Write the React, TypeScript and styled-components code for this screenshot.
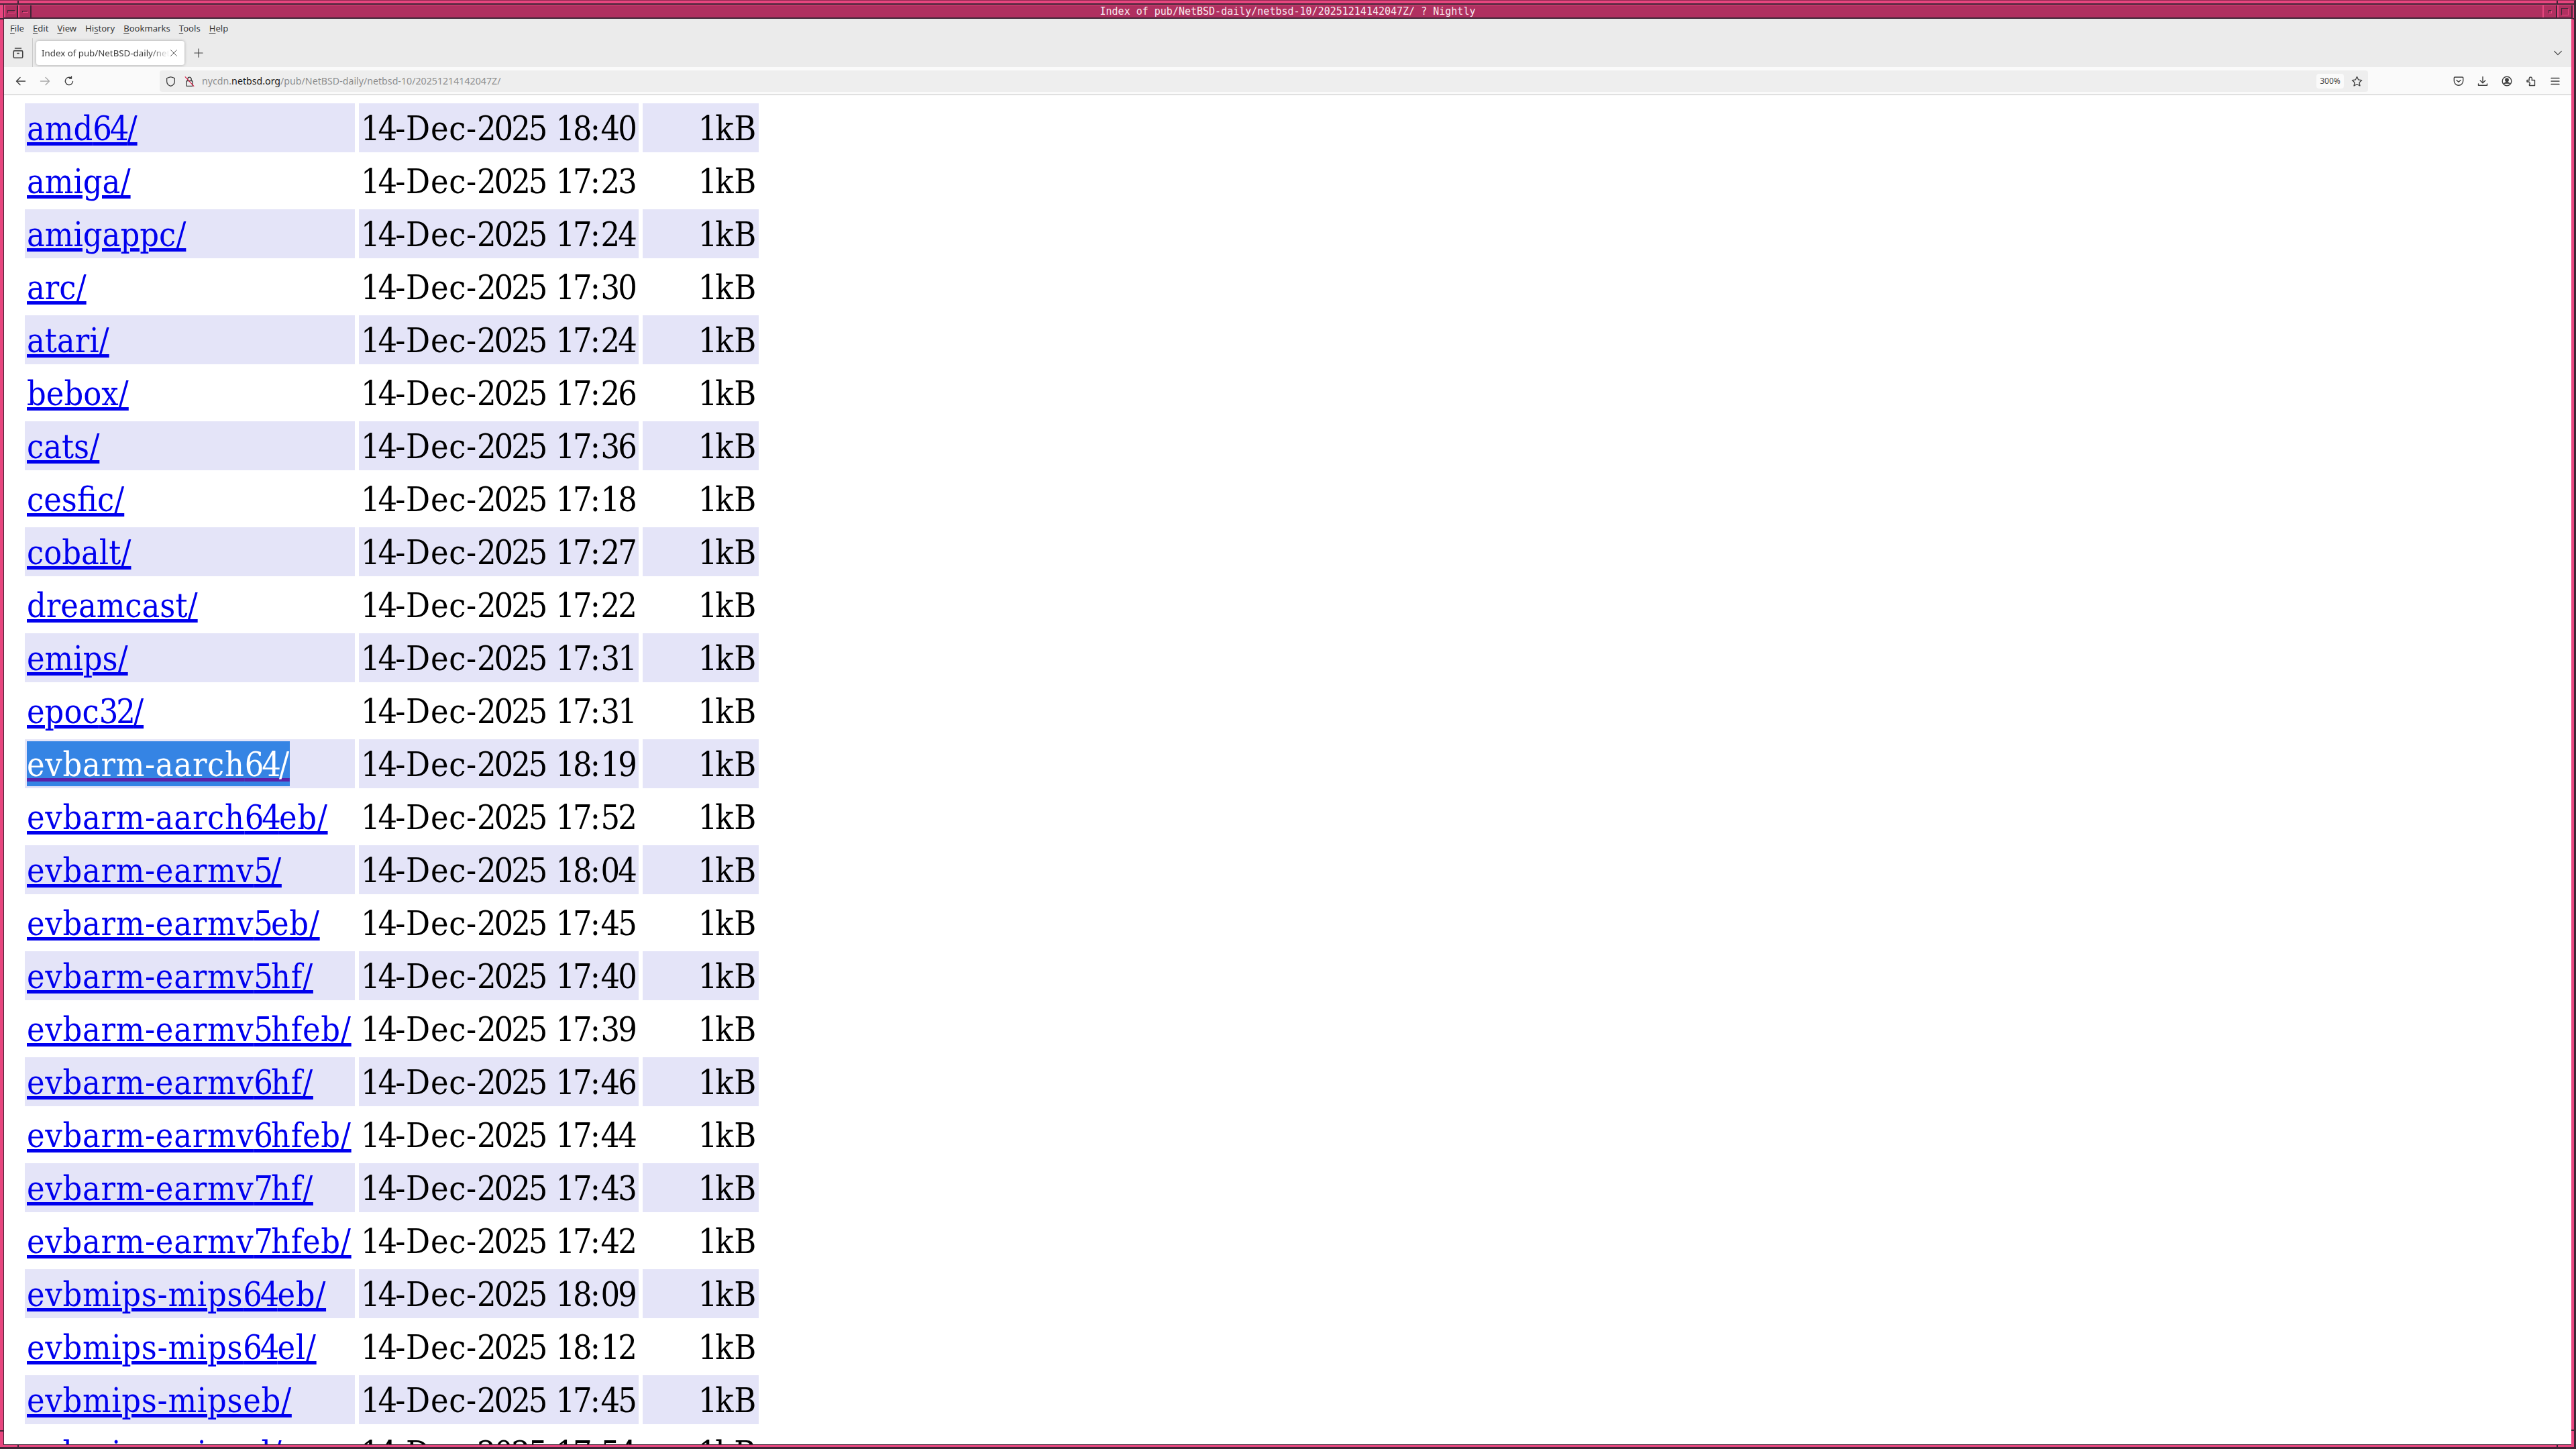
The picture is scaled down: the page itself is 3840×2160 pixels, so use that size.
import React from 'react';
import styled, { createGlobalStyle } from 'styled-components';

const Global = createGlobalStyle`
  html, body { margin: 0; padding: 0; background: #fff; }
  #root { width: 3840px; height: 2160px; overflow: hidden; }
`;

const sans = `"Noto Sans", "Open Sans", sans-serif`;

const Frame = styled.div`
  position: relative;
  width: 3840px;
  height: 2160px;
  box-sizing: border-box;
  display: flex;
  flex-direction: column;
  background: #e8467f;
  border-top: 1px solid #8e2a52;
  border-bottom: 3px solid #3f2536;
  border-right: 3px solid #3f2536;
  overflow: hidden;
`;
const Notch = styled.i`
  position: absolute;
  display: block;
  background: #3f2536;
  ${p => p.$pos}
`;
const TopEdge = styled.div`
  flex: none;
  height: 6px;
  box-sizing: border-box;
  background: #e8467f;
  border-bottom: 2px solid #3f2536;
`;
const Body = styled.div`
  flex: 1;
  min-height: 0;
  display: flex;
  flex-direction: column;
  margin: 0 4px 3px 5px;
  border-left: 1px solid #3f2536;
  border-bottom: 1px solid #3f2536;
  background: #fff;
`;
const TitleBar = styled.div`
  flex: none;
  height: 21px;
  margin: 0 -2px 0 0;
  display: flex;
  align-items: stretch;
  background: #b03060;
  border-top: 1px solid #e8467f;
  border-bottom: 2px solid #3f2536;
  box-sizing: border-box;
`;
const TitleButton = styled.div`
  flex: none;
  width: ${p => p.$w}px;
  display: flex;
  align-items: center;
  justify-content: center;
  box-sizing: border-box;
  border-left: 2px solid #e8467f;
  border-right: 2px solid #3f2536;
`;
const TitleText = styled.div`
  flex: 1;
  padding-left: 2px;
  text-align: center;
  color: #f8e8ee;
  font: 15px/18px "DejaVu Sans Mono", monospace;
  white-space: pre;
`;
const Pip = styled.span`
  display: block;
  box-sizing: border-box;
  width: ${p => p.$w}px;
  height: ${p => p.$h}px;
  border: 1px solid;
  border-color: #3f2536 #e8467f #e8467f #3f2536;
`;
const MenuBar = styled.div`
  flex: none;
  height: 29px;
  display: flex;
  align-items: center;
  background: #ebebeb;
  padding-left: 9px;
  gap: 13px;
  font: 13.1px/29px ${sans};
  color: #3a3a3a;
`;
const MenuItem = styled.span`
  white-space: pre;
  u { text-underline-offset: 2px; }
`;
const TabStrip = styled.div`
  flex: none;
  height: 43px;
  display: flex;
  align-items: center;
  background: #ebebeb;
`;
const ViewSlot = styled.div`
  flex: none;
  width: 43px;
  height: 43px;
  display: flex;
  align-items: center;
  justify-content: center;
  border-right: 1px solid #c9c9c9;
  box-sizing: border-box;
`;
const Tab = styled.div`
  flex: none;
  margin-left: 5px;
  width: 221px;
  height: 36px;
  box-sizing: border-box;
  background: #fff;
  border-radius: 4px;
  box-shadow: 0 0 4px rgba(0,0,0,.3);
  display: flex;
  align-items: center;
  padding: 0 10px 0 8px;
  font: 13.3px/36px ${sans};
  color: #3a3a3a;
`;
const TabLabel = styled.span`
  flex: 1;
  overflow: hidden;
  white-space: nowrap;
  -webkit-mask-image: linear-gradient(to right, #000 84%, transparent 100%);
  mask-image: linear-gradient(to right, #000 84%, transparent 100%);
`;
const NewTab = styled.div`
  flex: none;
  margin-left: 14px;
  display: flex;
`;
const Spring = styled.div`
  flex: 1;
`;
const Chevron = styled.div`
  flex: none;
  margin-right: 13px;
  display: flex;
`;
const NavBar = styled.div`
  flex: none;
  height: 42px;
  box-sizing: border-box;
  display: flex;
  align-items: center;
  padding: 2px 16px 0 17px;
  background: #fafafa;
  border-bottom: 2px solid #e0e0e0;
`;
const NavIcons = styled.div`
  flex: none;
  display: flex;
  align-items: center;
  gap: 20px;
  margin-right: 127px;
`;
const UrlBar = styled.div`
  flex: 1;
  height: 32px;
  display: flex;
  align-items: center;
  background: #eeeeee;
  border-radius: 4px;
  padding: 0 8px;
  font: 14.2px/32px ${sans};
  color: #8e8e8e;
  white-space: pre;
`;
const UrlIcon = styled.span`
  flex: none;
  display: flex;
  margin-right: ${p => p.$mr}px;
`;
const Host = styled.span`
  color: #1c1c1c;
`;
const Zoom = styled.span`
  flex: none;
  margin-left: auto;
  width: 41px;
  height: 22px;
  background: #fafafa;
  border-radius: 4px;
  text-align: center;
  font: 12px/22px ${sans};
  color: #4a4a4a;
`;
const Star = styled.span`
  flex: none;
  display: flex;
  margin-left: 11px;
`;
const RightIcons = styled.div`
  flex: none;
  display: flex;
  align-items: center;
  gap: 20px;
  margin-left: 127px;
`;
const Page = styled.div`
  flex: 1;
  min-height: 0;
  overflow: hidden;
  background: #fff;
  padding: 6px 0 0 25px;
`;
const Table = styled.table`
  border-collapse: separate;
  border-spacing: 6px;
  table-layout: fixed;
  width: 1106px;
  font-family: "DejaVu Serif Condensed", "DejaVu Serif", serif;
  font-stretch: condensed;
  font-size: 50px;
  line-height: 63px;
  letter-spacing: 0.7px;
  color: #000;
`;
const Row = styled.tr`
  background: ${p => (p.$odd ? '#e4e4f8' : 'transparent')};
`;
const Cell = styled.td`
  padding: 7px 3px 3px;
  white-space: nowrap;
  text-align: ${p => (p.$right ? 'right' : 'left')};
`;
const Digits = styled.span`
  letter-spacing: -3px;
`;
const NameLink = styled.a`
  color: ${p => (p.$selected ? '#fff' : '#0000ee')};
  background: ${p => (p.$selected ? '#3584e4' : 'transparent')};
  text-decoration-line: underline;
  text-decoration-color: ${p => (p.$selected ? '#5a20a8' : '#0000ee')};
  letter-spacing: ${p => (p.$tight ? '0' : '0.7px')};
  display: inline-block;
  padding-top: 4px;
  margin-top: -4px;
`;

const Narrowed = ({ text }: { text: string }) => (
  <>
    {text.split(/(\d+)/).map((part, i) => (i % 2 ? <Digits key={i}>{part}</Digits> : part))}
  </>
);

const Ic = ({ s = 18, children, sw = 1.4, c = '#3f3f3f' }: any) => (
  <svg width={s} height={s} viewBox="0 0 16 16" fill="none" stroke={c} strokeWidth={sw} strokeLinecap="round" strokeLinejoin="round">
    {children}
  </svg>
);

const rows: [string, string][] = [
  ['amd64/', '18:40'], ['amiga/', '17:23'], ['amigappc/', '17:24'], ['arc/', '17:30'], ['atari/', '17:24'],
  ['bebox/', '17:26'], ['cats/', '17:36'], ['cesfic/', '17:18'], ['cobalt/', '17:27'], ['dreamcast/', '17:22'],
  ['emips/', '17:31'], ['epoc32/', '17:31'], ['evbarm-aarch64/', '18:19'], ['evbarm-aarch64eb/', '17:52'],
  ['evbarm-earmv5/', '18:04'], ['evbarm-earmv5eb/', '17:45'], ['evbarm-earmv5hf/', '17:40'], ['evbarm-earmv5hfeb/', '17:39'],
  ['evbarm-earmv6hf/', '17:46'], ['evbarm-earmv6hfeb/', '17:44'], ['evbarm-earmv7hf/', '17:43'], ['evbarm-earmv7hfeb/', '17:42'],
  ['evbmips-mips64eb/', '18:09'], ['evbmips-mips64el/', '18:12'], ['evbmips-mipseb/', '17:45'], ['evbmips-mipsel/', '17:54'],
];

const notches = [
  'left: 26px; top: 0; width: 2px; height: 6px;',
  'left: 3811px; top: 0; width: 2px; height: 6px;',
  'left: 0; top: 26px; width: 5px; height: 2px;',
  'left: 3835px; top: 26px; width: 2px; height: 2px;',
  'left: 0; top: 2131px; width: 5px; height: 2px;',
  'left: 3833px; top: 2130px; width: 4px; height: 2px;',
  'left: 26px; top: 2152px; width: 2px; height: 4px;',
  'left: 3811px; top: 2152px; width: 2px; height: 4px;',
];

export default function App() {
  return (
    <Frame>
      <Global />
      <TopEdge />
      <Body>
        <TitleBar>
          <TitleButton $w={21}><Pip $w={12} $h={5} /></TitleButton>
          <TitleButton $w={20}><Pip $w={9} $h={3} /></TitleButton>
          <TitleText>Index of pub/NetBSD-daily/netbsd-10/20251214142047Z/ ? Nightly</TitleText>
          <TitleButton $w={22}><Pip $w={5} $h={5} /></TitleButton>
          <TitleButton $w={23}><Pip $w={11} $h={11} /></TitleButton>
        </TitleBar>
        <MenuBar>
          <MenuItem><u>F</u>ile</MenuItem>
          <MenuItem><u>E</u>dit</MenuItem>
          <MenuItem><u>V</u>iew</MenuItem>
          <MenuItem>Hi<u>s</u>tory</MenuItem>
          <MenuItem><u>B</u>ookmarks</MenuItem>
          <MenuItem><u>T</u>ools</MenuItem>
          <MenuItem><u>H</u>elp</MenuItem>
        </MenuBar>
        <TabStrip>
          <ViewSlot>
            <Ic s={18}><rect x="2" y="5" width="12" height="9.5" rx="1.5" /><path d="M4 1.800h8M7 8.500h2" /></Ic>
          </ViewSlot>
          <Tab>
            <TabLabel>Index of pub/NetBSD-daily/netbsd-10/20251214142047Z/</TabLabel>
            <Ic s={12} sw={1.2}><path d="M2 2l12 12M14 2L2 14" /></Ic>
          </Tab>
          <NewTab><Ic s={14} sw={1.3}><path d="M8 1v14M1 8h14" /></Ic></NewTab>
          <Spring />
          <Chevron><Ic s={14} sw={1.3}><path d="M2 5l6 6 6-6" /></Ic></Chevron>
        </TabStrip>
        <NavBar>
          <NavIcons>
            <Ic s={16}><path d="M14.500 8h-13M7 2.500L1.500 8 7 13.500" /></Ic>
            <Ic s={16} c="#a9a9a9"><path d="M1.500 8h13M9 2.500L14.500 8 9 13.500" /></Ic>
            <Ic s={16}><path d="M13.500 8.500A5.600 5.600 0 1 1 11.500 3.600M11.500 1v3h-3" /></Ic>
          </NavIcons>
          <UrlBar>
            <UrlIcon $mr={11}><Ic s={17} sw={1.2}><path d="M8 1.500l5.500 1.800v4.400c0 3.400-2.400 5.800-5.500 6.800-3.100-1-5.500-3.400-5.500-6.800V3.300z" /></Ic></UrlIcon>
            <UrlIcon $mr={10}>
              <svg width="17" height="17" viewBox="0 0 16 16" fill="none" strokeLinecap="round" strokeLinejoin="round">
                <rect x="3.500" y="7" width="9" height="7.500" rx="1.200" stroke="#3f3f3f" strokeWidth="1.300" />
                <path d="M5.500 7V4.500a2.500 2.500 0 0 1 5 0V7" stroke="#3f3f3f" strokeWidth="1.300" />
                <path d="M2 1.500l12 13" stroke="#d7264c" strokeWidth="1.200" />
              </svg>
            </UrlIcon>
            <span>nycdn.<Host>netbsd.org</Host>/pub/NetBSD-daily/netbsd-10/20251214142047Z/</span>
            <Zoom>300%</Zoom>
            <Star><Ic s={17} sw={1.2}><path d="M8 1.300l2.050 4.300 4.700.6-3.450 3.250.9 4.650L8 11.800l-4.200 2.300.9-4.650L1.250 6.200l4.700-.6z" /></Ic></Star>
          </UrlBar>
          <RightIcons>
            <Ic s={16}><path d="M2.500 2h11A1.200 1.200 0 0 1 14.700 3.200V7.500a6.700 6.700 0 0 1-13.400 0V3.200A1.200 1.200 0 0 1 2.500 2z" /><path d="M5 6.500l3 2.800 3-2.800" /></Ic>
            <Ic s={16}><path d="M8 1.500v9M4.200 7l3.800 3.800L11.800 7M1.500 12v2.300h13V12" /></Ic>
            <Ic s={16}><circle cx="8" cy="8" r="6.800" /><circle cx="8" cy="6.200" r="2.200" fill="#3f3f3f" /><path d="M3.800 11.800c1-1.500 2.400-2 4.200-2s3.200.5 4.200 2" fill="#3f3f3f" /></Ic>
            <Ic s={16}><path d="M2 6.500h3.500c-.8-1.300-.5-4.500 1.800-4.500s2.600 3 1.700 4.500h4.500v8h-8v-2.200c1.500.4 1-3.300-1-3.300H2z" /></Ic>
            <Ic s={16}><path d="M2 3.500h12M2 8h12M2 12.500h12" /></Ic>
          </RightIcons>
        </NavBar>
        <Page>
          <Table>
            <colgroup>
              <col style={{ width: 492 }} />
              <col style={{ width: 417 }} />
              <col style={{ width: 173 }} />
            </colgroup>
            <tbody>
              {rows.map(([name, time], i) => (
                <Row key={name} $odd={i % 2 === 0}>
                  <Cell>
                    <NameLink href="#" $selected={name === 'evbarm-aarch64/'} $tight={!name.includes('-')}>
                      <Narrowed text={name} />
                    </NameLink>
                  </Cell>
                  <Cell><Narrowed text={`14-Dec-2025 ${time}`} /></Cell>
                  <Cell $right><Narrowed text="1kB" /></Cell>
                </Row>
              ))}
            </tbody>
          </Table>
        </Page>
      </Body>
      {notches.map(p => <Notch key={p} $pos={p} />)}
    </Frame>
  );
}
